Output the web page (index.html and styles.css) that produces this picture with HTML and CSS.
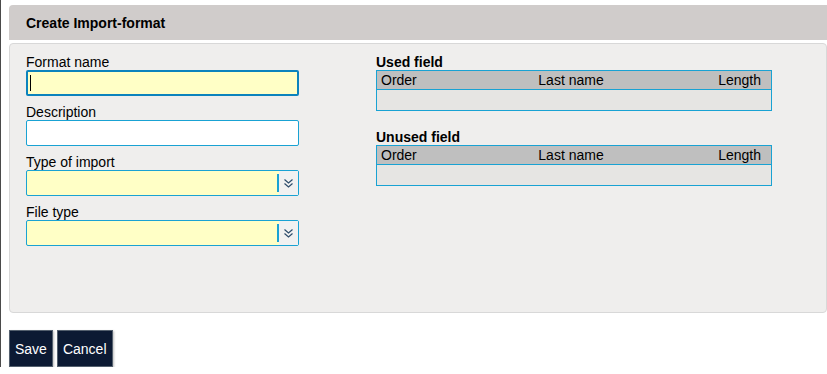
FILE: index.html
```html
<!DOCTYPE html>
<html lang="en">
  <head>
    <meta charset="UTF-8" />
    <meta name="viewport" content="width=device-width, initial-scale=1.0" />
    <title>Create Import-format</title>
    <link rel="stylesheet" href="styles.css">
  </head>
  <body>
    <div class="page_header">
      <h1>Create Import-format</h1>
    </div>
    <div class="panel">
      <div class="left_col">
        <label for="formatName">Format name</label>
        <div class="field_wrap">
          <input id="formatName" type="text" class="field required focused" value="" />
          <span class="caret"></span>
        </div>

        <label for="description">Description</label>
        <input id="description" type="text" class="field" />

        <label for="importType">Type of import</label>
        <div class="select_box">
          <span class="select_value"></span>
          <span class="select_arrow">
            <svg width="11" height="11" viewBox="0 0 11 11">
              <path d="M1.5 1.5 L5.5 5 L9.5 1.5 M1.5 5.5 L5.5 9 L9.5 5.5" fill="none" stroke="#2d4c6b" stroke-width="1.2" />
            </svg>
          </span>
        </div>

        <label for="fileType">File type</label>
        <div class="select_box">
          <span class="select_value"></span>
          <span class="select_arrow">
            <svg width="11" height="11" viewBox="0 0 11 11">
              <path d="M1.5 1.5 L5.5 5 L9.5 1.5 M1.5 5.5 L5.5 9 L9.5 5.5" fill="none" stroke="#2d4c6b" stroke-width="1.2" />
            </svg>
          </span>
        </div>
      </div>

      <div class="right_col">
        <div class="grid_title">Used field</div>
        <table class="grid">
          <tr>
            <th class="col_order">Order</th>
            <th class="col_name">Last name</th>
            <th class="col_length">Length</th>
          </tr>
          <tr class="empty_row"><td colspan="3"></td></tr>
        </table>

        <div class="grid_title">Unused field</div>
        <table class="grid">
          <tr>
            <th class="col_order">Order</th>
            <th class="col_name">Last name</th>
            <th class="col_length">Length</th>
          </tr>
          <tr class="empty_row"><td colspan="3"></td></tr>
        </table>
      </div>
    </div>

    <div class="buttons">
      <button type="button">Save</button>
      <button type="button">Cancel</button>
    </div>
  </body>
</html>
```

FILE: styles.css
```css
html {
  border-left: 1px solid #4a4a4a;
}
body {
  font-family: "Liberation Sans", Arial, sans-serif;
  font-size: 14px;
  color: #000;
  margin: 0;
  padding: 5px 0 0 8px;
  background: #fff;
}
.page_header {
  height: 35px;
  background-color: #d0cccb;
  border-radius: 4px 0 0 0;
  display: flex;
  align-items: center;
  padding-left: 17px;
}
h1 {
  margin: 0;
  font-size: 14px;
  font-weight: bold;
}
.panel {
  margin-top: 3px;
  background: #efeeed;
  border: 1px solid #d8d8d8;
  border-radius: 4px;
  display: flex;
  padding: 10px 0 0 16px;
  box-sizing: border-box;
  width: 818px;
  height: 270px;
}
.left_col {
  width: 273px;
  display: flex;
  flex-direction: column;
}
label {
  display: block;
  height: 16px;
  line-height: 16px;
}
.field {
  width: 273px;
  height: 26px;
  box-sizing: border-box;
  border: 1px solid #19a2d3;
  border-radius: 2px;
  background: #fff;
  margin: 0 0 8px 0;
  padding: 0 5px;
  font-family: inherit;
  font-size: 14px;
  outline: none;
}
.field_wrap {
  position: relative;
}
.required {
  background: #ffffc6;
}
.focused {
  border: 2px solid #0b83bd;
}
.caret {
  position: absolute;
  left: 4px;
  top: 5px;
  width: 1px;
  height: 16px;
  background: #000;
}
.select_box {
  width: 273px;
  height: 26px;
  box-sizing: border-box;
  border: 1px solid #19a2d3;
  border-radius: 2px;
  background: #ffffc6;
  margin-bottom: 8px;
  display: flex;
}
.select_value {
  flex: 1;
  border-right: 2px solid #19a2d3;
  margin: 3px 0;
}
.select_arrow {
  width: 19px;
  background: #f1f1f1;
  display: flex;
  align-items: center;
  justify-content: center;
}
.right_col {
  margin-left: 77px;
  width: 396px;
}
.grid_title {
  font-weight: bold;
  font-size: 14px;
  height: 16px;
  line-height: 16px;
}
.grid {
  width: 396px;
  border-collapse: collapse;
  border: 1px solid #19a2d3;
  margin-bottom: 18px;
}
.grid th {
  background: #bfbfbf;
  font-weight: normal;
  height: 18px;
  padding: 0 4px;
  line-height: 18px;
  border-bottom: 1px solid #19a2d3;
}
.col_order {
  text-align: left;
  width: 120px;
}
.col_name {
  text-align: center;
}
.col_length {
  text-align: right;
  width: 120px;
  padding-right: 10px !important;
}
.empty_row td {
  background: #e6e5e3;
  height: 20px;
  padding: 0;
}
.buttons {
  margin-top: 17px;
  display: flex;
  gap: 4px;
}
button {
  height: 37px;
  padding: 0 5px;
  background-color: #0c1a33;
  color: #fff;
  border: 1px solid #54606e;
  font-family: inherit;
  font-size: 14px;
  box-shadow: 1px 1px 2px rgba(0, 0, 0, 0.25);
  cursor: pointer;
}
```
